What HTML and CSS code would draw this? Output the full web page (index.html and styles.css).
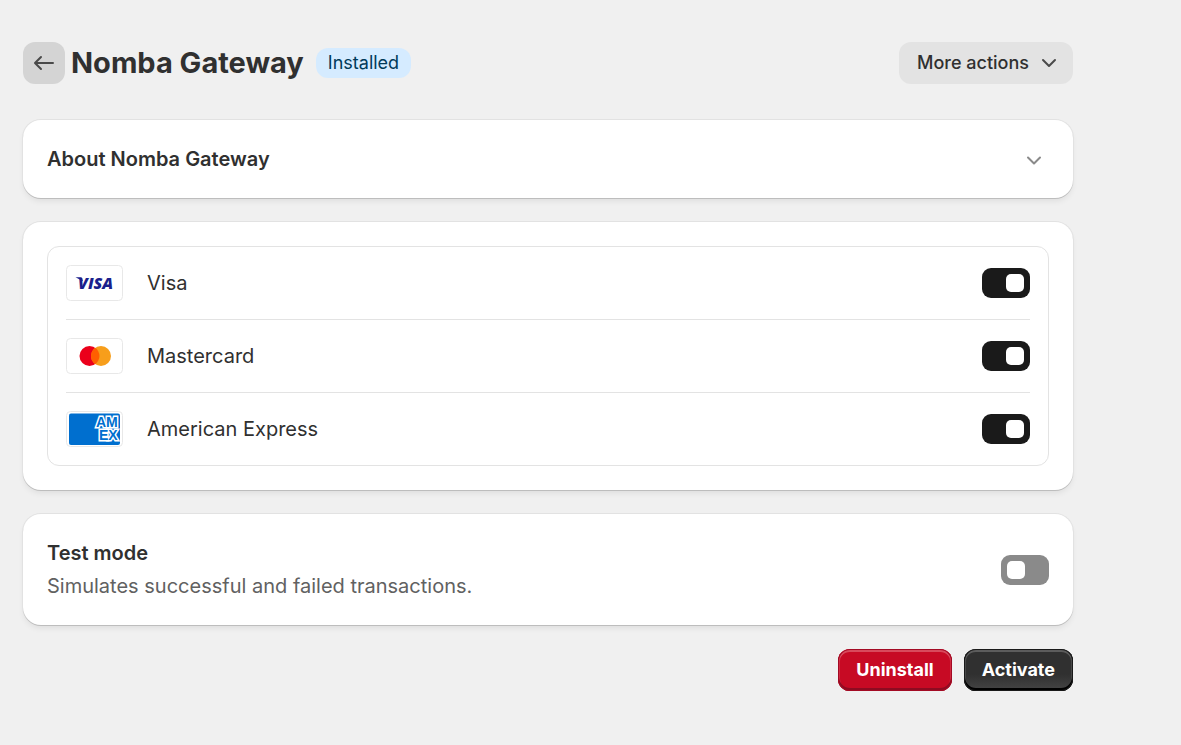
FILE: index.html
```html
<!DOCTYPE html>
<html lang="en">
<head>
  <meta charset="UTF-8">
  <meta name="viewport" content="width=device-width, initial-scale=1.0">
  <title>Nomba Gateway</title>
  <link rel="stylesheet" href="styles.css">
</head>
<body>
  <main class="page">
    <header class="page-header">
      <button type="button" class="back-button" aria-label="Back">
        <svg width="30" height="30" viewBox="0 0 30 30">
          <path d="M24 15H6.500M12 9L6 15l6 6" />
        </svg>
      </button>
      <h1>Nomba Gateway</h1>
      <span class="badge">Installed</span>
      <button type="button" class="more-actions" aria-haspopup="true">
        More actions
        <svg width="16" height="16" viewBox="0 0 16 16">
          <path d="M2 6l6 6 6-6" />
        </svg>
      </button>
    </header>

    <section class="card">
      <button type="button" class="about-toggle" aria-expanded="false">
        About Nomba Gateway
        <svg width="30" height="30" viewBox="0 0 30 30">
          <path d="M9 13.500l6 6 6-6" />
        </svg>
      </button>
    </section>

    <section class="card">
      <ul class="methods">
        <li class="method">
          <svg class="logo" viewBox="0 0 57 36" aria-hidden="true">
            <rect class="logo-frame" x="0.5" y="0.5" width="56" height="35" rx="4" />
            <path fill="#1a1f8c" d="M9.500 12.200h6l1.500 4z" />
            <text class="visa-text" x="12" y="24">VISA</text>
          </svg>
          <label for="visa">Visa</label>
          <input type="checkbox" class="switch" id="visa" checked>
        </li>
        <li class="method">
          <svg class="logo" viewBox="0 0 57 36" aria-hidden="true">
            <rect class="logo-frame" x="0.5" y="0.5" width="56" height="35" rx="4" />
            <circle cx="23.500" cy="18" r="10" fill="#eb001b" />
            <circle cx="35" cy="18" r="10" fill="#f79e1b" />
            <path fill="#ff5f00" d="M29.200 9.800a10 10 0 0 1 0 16.400a10 10 0 0 1 0-16.400z" />
          </svg>
          <label for="mastercard">Mastercard</label>
          <input type="checkbox" class="switch" id="mastercard" checked>
        </li>
        <li class="method">
          <svg class="logo" viewBox="0 0 57 36" aria-hidden="true">
            <defs>
              <clipPath id="amex-card">
                <rect x="3" y="2.500" width="51" height="31.500" rx="2" />
              </clipPath>
            </defs>
            <rect class="logo-frame" x="0.5" y="0.5" width="56" height="35" rx="4" />
            <g clip-path="url(#amex-card)">
              <rect x="3" y="2" width="51" height="32" fill="#006fcf" />
              <text class="amex-text" x="30" y="16">AM</text>
              <text class="amex-text" x="33" y="29">EX</text>
            </g>
          </svg>
          <label for="amex">American Express</label>
          <input type="checkbox" class="switch" id="amex" checked>
        </li>
      </ul>
    </section>

    <section class="card test-mode">
      <div>
        <h2><label for="test-mode">Test mode</label></h2>
        <p>Simulates successful and failed transactions.</p>
      </div>
      <input type="checkbox" class="switch" id="test-mode">
    </section>

    <div class="page-actions">
      <button type="button" class="button button-critical">Uninstall</button>
      <button type="button" class="button button-primary">Activate</button>
    </div>
  </main>
</body>
</html>
```
FILE: styles.css
```css
* {
  box-sizing: border-box;
}

body {
  margin: 0;
  background-color: #f0f0f0;
  color: #303030;
  font-family: Inter, sans-serif;
  font-size: 20px;
  line-height: 30px;
}

h1, h2, p, ul {
  margin: 0;
  padding: 0;
}

button {
  border: 0;
  font-family: inherit;
  color: inherit;
  cursor: pointer;
}

button svg {
  fill: none;
  stroke: #4a4a4a;
  stroke-width: 2;
  stroke-linecap: round;
  stroke-linejoin: round;
}

.page {
  max-width: 1096px;
  padding: 42px 23px;
}

/* Header */
.page-header {
  display: flex;
  align-items: center;
  margin-bottom: 36px;
}

.back-button {
  display: flex;
  align-items: center;
  justify-content: center;
  width: 42px;
  height: 42px;
  padding: 0;
  border-radius: 12px;
  background-color: #d4d4d4;
}

h1 {
  margin-left: 6px;
  font-size: 29px;
  font-weight: 650;
  line-height: 36px;
}

.badge {
  margin-left: 12px;
  padding: 0 12px;
  border-radius: 12px;
  background-color: #d5ebff;
  color: #003a5a;
  font-size: 18px;
}

.more-actions {
  display: flex;
  align-items: center;
  gap: 12px;
  height: 42px;
  margin-left: auto;
  padding: 0 16px 2px 18px;
  border-radius: 12px;
  background-color: #e3e3e3;
  font-size: 18px;
  font-weight: 550;
}

/* Cards */
.card {
  margin-bottom: 24px;
  padding: 24px;
  border-radius: 18px;
  background-color: #fff;
  box-shadow: 0 1px 0 0 #bdbdbd, 0 0 0 1px #e2e2e2, 0 4px 6px -1px rgba(0, 0, 0, 0.08);
}

.about-toggle {
  display: flex;
  align-items: center;
  justify-content: space-between;
  width: 100%;
  padding: 0;
  background: none;
  font-size: 20px;
  font-weight: 600;
  line-height: 30px;
  text-align: left;
}

.about-toggle svg {
  stroke: #8a8a8a;
}

.methods {
  padding: 0 18px;
  border: 1px solid #e3e3e3;
  border-radius: 12px;
  list-style: none;
}

.method {
  display: flex;
  align-items: center;
  padding: 18px 0;
}

.method + .method {
  border-top: 1px solid #e3e3e3;
}

.logo {
  width: 57px;
  height: 36px;
  margin-right: 24px;
}

.logo-frame {
  fill: #fff;
  stroke: #e8e8e8;
}

.visa-text {
  fill: #1a1f8c;
  font-family: "Open Sans", sans-serif;
  font-size: 16px;
  font-style: italic;
  font-weight: 800;
}

.amex-text {
  fill: #006fcf;
  stroke: #fff;
  stroke-width: 3px;
  paint-order: stroke;
  font-family: "Liberation Sans", sans-serif;
  font-size: 14px;
  font-weight: 700;
}

.switch {
  appearance: none;
  flex-shrink: 0;
  width: 48px;
  height: 30px;
  margin: 0 0 0 auto;
  padding: 6px;
  border-radius: 9px;
  background-color: #8a8a8a;
  cursor: pointer;
}

.switch::before {
  content: "";
  display: block;
  width: 18px;
  height: 18px;
  border-radius: 5px;
  background-color: #fff;
}

.switch:checked {
  background-color: #1a1a1a;
}

.switch:checked::before {
  margin-left: auto;
}

.test-mode {
  display: flex;
  align-items: center;
}

h2 {
  margin-bottom: 3px;
  font-size: 20px;
  font-weight: 600;
}

.test-mode p {
  color: #616161;
}

/* Footer buttons */
.page-actions {
  display: flex;
  justify-content: flex-end;
  gap: 12px;
}

.button {
  height: 42px;
  padding: 0 18px 2px;
  border-radius: 12px;
  color: #fff;
  font-size: 18px;
  font-weight: 650;
}

.button-critical {
  background-color: #c70a24;
  box-shadow: inset 0 0 0 1px #a30a24, inset 0 -2px 0 1px #8e0b21, inset 0 2px 0 1px #d84a5c, inset 0 0 0 2px #d02a40;
}

.button-primary {
  background: linear-gradient(#303030 60%, #454545);
  box-shadow: inset 0 0 0 1px #1a1a1a, inset 0 -2px 0 1px #000, inset 0 2px 0 1px #5c5c5c, inset 0 0 0 2px #484848;
}
```
